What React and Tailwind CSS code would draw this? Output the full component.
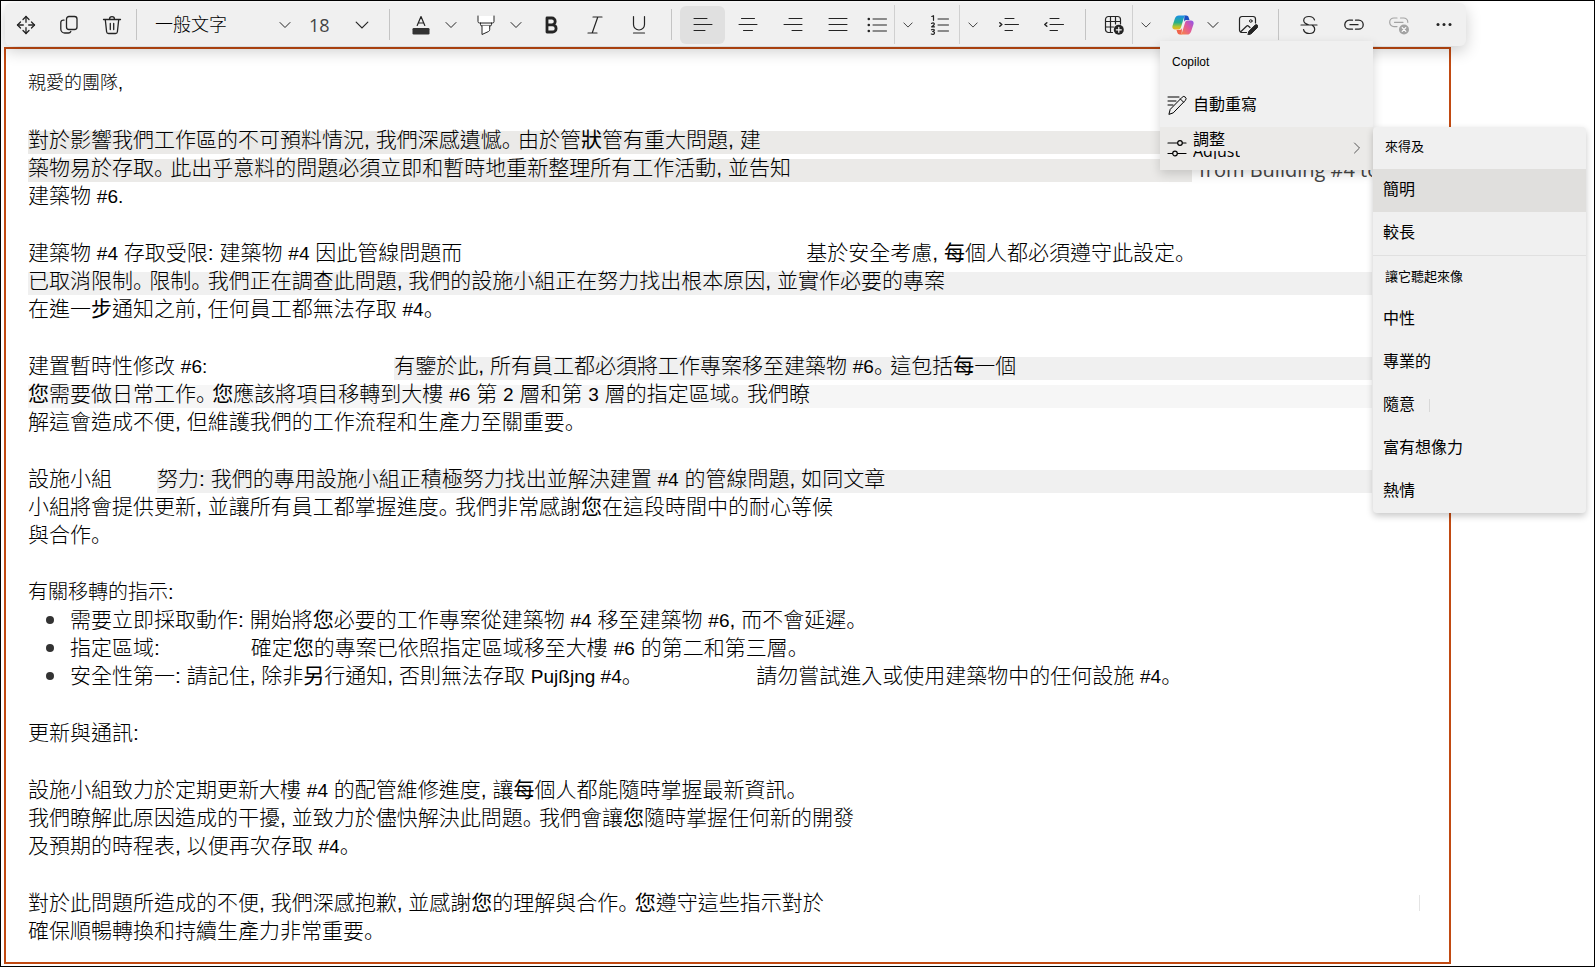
import React, { useState } from 'react';

const Svg = ({ children, size = 20, className = '' }) => (
  <svg
    width={size}
    height={size}
    viewBox="0 0 20 20"
    fill="none"
    stroke="currentColor"
    strokeWidth="1"
    strokeLinecap="round"
    strokeLinejoin="round"
    aria-hidden="true"
    className={`shrink-0 ${className}`}
  >
    {children}
  </svg>
);

const ChevronDown = ({ size = 12, className = '' }) => (
  <svg width={size} height={size} viewBox="0 0 12 12" fill="none" stroke="currentColor" strokeWidth="1" strokeLinecap="round" aria-hidden="true" className={className}>
    <path d="M1 3.5l5 5 5-5" />
  </svg>
);

const MoveIcon = () => (
  <Svg>
    <g strokeWidth="1.3">
      <path d="M10 1.5v5.8M10 12.7v5.8M1.5 10h5.8M12.7 10h5.8" />
      <path d="M7 4.5l3-3 3 3M7 15.5l3 3 3-3M4.5 7l-3 3 3 3M15.5 7l3 3-3 3" />
    </g>
  </Svg>
);

const CopyIcon = () => (
  <Svg>
    <g strokeWidth="1.3">
      <rect x="7.5" y="1.5" width="10.5" height="13" rx="2.5" />
      <path d="M5 5.2A2.4 2.4 0 0 0 1.8 7.5V14a4 4 0 0 0 4 4h3.7a2.5 2.5 0 0 0 2.3-1.5" />
    </g>
  </Svg>
);

const TrashIcon = () => (
  <Svg>
    <g strokeWidth="1.3">
      <path d="M1.5 4.5h17M7.5 4.2a2.5 2.5 0 0 1 5 0" />
      <path d="M3.3 4.7l1.3 12a2 2 0 0 0 2 1.8h6.8a2 2 0 0 0 2-1.8l1.3-12M8.3 8.5v6M11.7 8.5v6" />
    </g>
  </Svg>
);

const FontColorIcon = () => (
  <Svg>
    <path d="M6.2 10.5L10 1.5l3.8 9M7.4 8h5.2" strokeWidth="1.2" />
    <rect x="1.5" y="13" width="17" height="6.5" rx="1.2" fill="#333" stroke="none" />
  </Svg>
);

const HighlightIcon = () => (
  <Svg>
    <path d="M2 1v5.5A1.5 1.5 0 0 0 3.5 8h13A1.5 1.5 0 0 0 18 6.5V1H2z" fill="#fff" stroke="none" />
    <path d="M2 1v5.5A1.5 1.5 0 0 0 3.5 8h13A1.5 1.5 0 0 0 18 6.5V1" />
    <path d="M4.5 8v1.5A1.5 1.5 0 0 0 6 11h8a1.5 1.5 0 0 0 1.5-1.5V8" />
    <path d="M6 11v8.5l6.5-3a2 2 0 0 0 1.2-1.8V11" fill="#fff" />
  </Svg>
);

const BoldIcon = () => (
  <Svg>
    <path d="M6 3h4.8a3.4 3.4 0 0 1 0 6.8H6zM6 9.8h5.5a3.6 3.6 0 0 1 0 7.2H6z" strokeWidth="2.8" />
  </Svg>
);

const ItalicIcon = () => (
  <Svg>
    <path d="M8 2h9M3 18h9M12.8 2L7.2 18" strokeWidth="1.2" />
  </Svg>
);

const UnderlineIcon = () => (
  <Svg>
    <path d="M4.5 1.5v8a5.5 5.5 0 0 0 11 0v-8M4.5 18h11" strokeWidth="1.2" />
  </Svg>
);

const AlignLeftIcon = () => (
  <Svg>
    <path d="M1 3.5h13M1 9.5h18M1 15.5h11" />
  </Svg>
);

const AlignCenterIcon = () => (
  <Svg>
    <path d="M3.5 3.5h13M1 9.5h18M5.5 15.5h9" />
  </Svg>
);

const AlignRightIcon = () => (
  <Svg>
    <path d="M6 3.5h13M1 9.5h18M9 15.5h10" />
  </Svg>
);

const JustifyIcon = () => (
  <Svg>
    <path d="M1 3.5h18M1 9.5h18M1 15.5h18" />
  </Svg>
);

const BulletsIcon = () => (
  <Svg>
    <path d="M6 4h13.5M6 10h13.5M6 16h13.5" />
    <g fill="currentColor" stroke="none">
      <circle cx="1.8" cy="4" r="1.3" />
      <circle cx="1.8" cy="10" r="1.3" />
      <circle cx="1.8" cy="16" r="1.3" />
    </g>
  </Svg>
);

const NumberingIcon = () => (
  <Svg>
    <path d="M8 4h10.5M8 10h10.5M8 16h10.5" />
    <path d="M1.8 1.5L3.5.7v4.6M1.5 8.4q1.7-1.2 2.6 0t-2.4 3.4h2.8M1.5 14.8q1.6-1 2.6-.2t-1.4 1.900q2.3.3 1.6 1.900t-3 .6" strokeWidth="1.2" />
  </Svg>
);

const IndentIcon = () => (
  <Svg>
    <path d="M6 3.5h9M6 9.5h13.5M6 15.5h7.5" />
    <path d="M.8 7.7L2.8 9.5.8 11.3" strokeWidth="1.5" />
  </Svg>
);

const OutdentIcon = () => (
  <Svg>
    <path d="M6 3.5h9M6 9.5h13.5M6 15.5h7.5" />
    <path d="M2.8 7.7L.8 9.5l2 1.8" strokeWidth="1.5" />
  </Svg>
);

const TableAddIcon = () => (
  <Svg>
    <path d="M8.5 17.5h-4a3 3 0 0 1-3-3v-10a3 3 0 0 1 3-3h9a3 3 0 0 1 3 3V9M1.5 6.5h15M1.5 12h8M6.5 1.5v16M11.5 1.5V9" strokeWidth="1.2" />
    <circle cx="14.8" cy="14.8" r="5" fill="#242424" stroke="none" />
    <path d="M14.8 12.3v5M12.3 14.8h5" stroke="#fff" strokeWidth="1.2" />
  </Svg>
);

const CopilotIcon = () => (
  <svg width="22" height="20" viewBox="0 0 22 20" aria-hidden="true" className="shrink-0">
    <defs>
      <linearGradient id="cpBlue" x1="0" y1="0" x2="0" y2="1">
        <stop offset="0" stopColor="#1b8fe8" />
        <stop offset="0.5" stopColor="#27b08a" />
        <stop offset="0.8" stopColor="#b6c52c" />
        <stop offset="1" stopColor="#f2b01e" />
      </linearGradient>
      <linearGradient id="cpPink" x1="1" y1="0" x2="0" y2="1">
        <stop offset="0" stopColor="#8a55ee" />
        <stop offset="0.45" stopColor="#e0589c" />
        <stop offset="1" stopColor="#fb8a3c" />
      </linearGradient>
    </defs>
    <path d="M12.5.5h1.8c1.2 0 2 .7 2.4 1.9l.8 2.6h-3.2c-1.3 0-2 .8-2.4 2z" fill="#1c4fc4" />
    <path d="M6.8.5h7c-1 .2-1.6 1-2 2.4L9 12.2c-.5 1.5-1.4 2.3-2.8 2.3H3c-2.2 0-3.1-1.5-2.4-3.9l2.3-7C3.6 1.5 4.9.5 6.8.5z" fill="url(#cpBlue)" />
    <path d="M9.5 19.5H7.7c-1.2 0-2-.7-2.4-1.9L4.5 15h3.2c1.3 0 2-.8 2.4-2z" fill="#f0644b" />
    <path d="M15.2 19.5h-7c1-.2 1.6-1 2-2.4L13 7.8c.5-1.5 1.4-2.3 2.8-2.3H19c2.2 0 3.1 1.5 2.4 3.9l-2.3 7c-.7 2.1-2 3.1-3.9 3.1z" fill="url(#cpPink)" />
  </svg>
);

const ImageEditIcon = () => (
  <Svg>
    <path d="M8.5 17.5H4A2.5 2.5 0 0 1 1.5 15V4A2.5 2.5 0 0 1 4 1.5h11A2.5 2.5 0 0 1 17.5 4v4M3 16.5l5.5-5.3a1.5 1.5 0 0 1 2.1 0l1.4 1.3" strokeWidth="1.2" />
    <circle cx="12.8" cy="6" r="1.3" />
    <path d="M10 19.5l.8-3.2 6.3-6.2a1.7 1.7 0 0 1 2.4 2.4l-6.3 6.2z" fill="#242424" />
  </Svg>
);

const StrikeIcon = () => (
  <Svg>
    <path d="M15.5 5c-.6-2.1-2.7-3.5-5.5-3.5-3 0-5.3 1.5-5.3 4 0 2.200 1.800 3.400 5.300 4.500M2 10h16M4.500 14.500c.6 2.400 2.700 4 5.700 4 3.300 0 5.500-1.700 5.500-4.300 0-1.700-.9-3-2.700-4.200" strokeWidth="1.2" />
  </Svg>
);

const LinkIcon = () => (
  <Svg>
    <path d="M8.5 5.2H5.3a4.5 4.5 0 0 0 0 9h3.2M11.5 5.2h3.2a4.5 4.5 0 0 1 0 9h-3.2M6 9.7h8" strokeWidth="1.3" />
  </Svg>
);

const UnlinkIcon = () => (
  <Svg className="text-[#a3a3a3]">
    <path d="M8 3H5a4.3 4.3 0 0 0 0 8.6h3M11.5 3h3a4.3 4.3 0 0 1 4.3 4.3M5.5 7.3H14" strokeWidth="1.2" />
    <circle cx="15" cy="14.5" r="5" fill="#a3a3a3" stroke="none" />
    <path d="M13.2 12.7l3.6 3.6M16.8 12.7l-3.6 3.6" stroke="#fff" strokeWidth="1.2" />
  </Svg>
);

const MoreIcon = () => (
  <Svg>
    <g fill="currentColor" stroke="none">
      <circle cx="4" cy="9.5" r="1.5" />
      <circle cx="10" cy="9.5" r="1.5" />
      <circle cx="16" cy="9.5" r="1.5" />
    </g>
  </Svg>
);

const RewriteIcon = () => (
  <Svg>
    <path d="M1 2h11M1 6h8M1 10h5" />
    <path d="M2 19l1.2-4.6L15.2 2.2a2.200 2.200 0 0 1 3.200 3.100L6.500 17.600zM13.400 4l3.100 3.100" />
  </Svg>
);

const AdjustIcon = () => (
  <Svg>
    <path d="M1 5h9.5M15.5 5H19M1 15.5h4.5M10.5 15.5H19" strokeWidth="1.2" />
    <circle cx="13" cy="5" r="2.3" strokeWidth="1.2" />
    <circle cx="8" cy="15.5" r="2.3" strokeWidth="1.2" />
  </Svg>
);

const ToolButton = ({ label, className = 'w-[44px]', children, ...rest }) => (
  <button type="button" aria-label={label} className={`flex h-[38px] shrink-0 items-center justify-center rounded-md hover:bg-[#e0e0e0] ${className}`} {...rest}>
    {children}
  </button>
);

const Divider = ({ className = '' }) => <div className={`h-[31px] w-px shrink-0 bg-[#c4c4c4] ${className}`} />;

const SplitEdge = () => <div className="h-[39px] w-px shrink-0 bg-[#d0d0d0]" />;

const CopilotMenu = () => (
  <div className="absolute -left-[6px] top-[35px] z-20 w-[213px] bg-[#f0f0f0] text-black shadow-[0_4px_10px_rgba(0,0,0,0.16)]" role="menu">
    <p className="flex h-[43px] items-center px-3 text-xs">Copilot</p>
    <button type="button" role="menuitem" className="flex h-[43px] w-full items-center gap-[6px] pl-[7px] text-base">
      <RewriteIcon />
      <span>自動重寫</span>
    </button>
    <div className="relative">
      <button type="button" role="menuitem" className="flex h-[43px] w-full items-center gap-[6px] bg-[#ebeae8] pl-[7px] pr-[10px] text-base">
        <AdjustIcon />
        <span className="flex flex-1 flex-col items-start gap-px self-start pt-[3px]">
          <span className="leading-5">調整</span>
          <span className="flex h-2 items-end overflow-hidden font-['Open_Sans','Noto_Sans',sans-serif] leading-4">Adjust</span>
        </span>
        <ChevronDown className="-rotate-90 text-[#555]" />
      </button>
      <AdjustMenu />
    </div>
  </div>
);

const lengthOptions = ['簡明', '較長'];
const toneOptions = ['中性', '專業的', '隨意', '富有想像力', '熱情'];

const AdjustMenu = () => {
  const [selected, setSelected] = useState('簡明');

  const renderItem = (item) => (
    <button
      key={item}
      type="button"
      role="menuitem"
      onClick={() => setSelected(item)}
      className={`flex h-[43px] w-full items-center px-[10px] text-base ${selected === item ? 'bg-[#e0dfdd]' : ''}`}
    >
      {item}
      {item === '隨意' && <span className="ml-[14px] h-[13px] w-px bg-[#d8d8d8]" />}
    </button>
  );

  return (
    <div className="absolute left-full top-0 w-[213px] rounded-sm bg-[#f0f0f0] shadow-[0_3px_7px_rgba(0,0,0,0.22)]" role="menu">
      <p className="flex h-[42px] items-center px-3 pb-[2px] text-[13px]">來得及</p>
      {lengthOptions.map(renderItem)}
      <div className="h-px bg-[#e0e0e0]" />
      <p className="flex h-[42px] items-center px-3 text-[13px]">讓它聽起來像</p>
      {toneOptions.map(renderItem)}
    </div>
  );
};

const Toolbar = () => {
  const [align, setAlign] = useState('left');
  const alignments = [
    { id: 'left', label: '靠左對齊', icon: <AlignLeftIcon /> },
    { id: 'center', label: '置中', icon: <AlignCenterIcon /> },
    { id: 'right', label: '靠右對齊', icon: <AlignRightIcon /> },
    { id: 'justify', label: '左右對齊', icon: <JustifyIcon /> },
  ];

  return (
    <div className="relative z-10 mt-[2px] ml-1 flex h-[43px] w-fit items-center rounded-md bg-[#f0f0f0] text-[#242424] shadow-[0_5px_16px_rgba(0,0,0,0.2)]">
      <ToolButton label="移動" className="w-[42px]"><MoveIcon /></ToolButton>
      <ToolButton label="複製" className="w-[43px]"><CopyIcon /></ToolButton>
      <ToolButton label="刪除" className="w-[43px]"><TrashIcon /></ToolButton>
      <Divider className="ml-[3px]" />
      <label className="grid w-[161px] items-center">
        <select aria-label="段落樣式" className="col-start-1 row-start-1 appearance-none bg-transparent pl-[18px] text-lg font-light text-black outline-none">
          <option>一般文字</option>
        </select>
        <ChevronDown className="pointer-events-none col-start-1 row-start-1 mr-[7px] justify-self-end" />
      </label>
      <label className="grid w-[91px] items-center">
        <select aria-label="字型大小" className="col-start-1 row-start-1 appearance-none bg-transparent pl-[11px] font-['Open_Sans','Noto_Sans',sans-serif] text-lg text-[#444] outline-none">
          <option>18</option>
        </select>
        <ChevronDown size={14} className="pointer-events-none col-start-1 row-start-1 mr-5 justify-self-end" />
      </label>
      <Divider />
      <ToolButton label="字型色彩" className="ml-[14px] w-[34px]"><FontColorIcon /></ToolButton>
      <ToolButton label="字型色彩選項" className="w-[25px]"><ChevronDown /></ToolButton>
      <ToolButton label="醒目提示" className="ml-[6px] w-[34px]"><HighlightIcon /></ToolButton>
      <ToolButton label="醒目提示選項" className="w-[26px]"><ChevronDown /></ToolButton>
      <ToolButton label="粗體"><BoldIcon /></ToolButton>
      <ToolButton label="斜體"><ItalicIcon /></ToolButton>
      <ToolButton label="底線"><UnderlineIcon /></ToolButton>
      <Divider className="ml-[10px] mr-2" />
      {alignments.map((item) => (
        <ToolButton
          key={item.id}
          label={item.label}
          aria-pressed={align === item.id}
          onClick={() => setAlign(item.id)}
          className={align === item.id ? 'w-[45px] bg-[#e0e0e0]' : 'w-[45px]'}
        >
          {item.icon}
        </ToolButton>
      ))}
      <ToolButton label="項目符號清單" className="w-[34px]"><BulletsIcon /></ToolButton>
      <SplitEdge />
      <ToolButton label="項目符號選項" className="w-[26px]"><ChevronDown size={10} /></ToolButton>
      <ToolButton label="編號清單" className="w-[38px]"><NumberingIcon /></ToolButton>
      <SplitEdge />
      <ToolButton label="編號選項" className="w-[26px]"><ChevronDown size={10} /></ToolButton>
      <ToolButton label="增加縮排" className="w-[46px]"><IndentIcon /></ToolButton>
      <ToolButton label="減少縮排"><OutdentIcon /></ToolButton>
      <Divider className="mx-[9px]" />
      <ToolButton label="插入表格" className="w-[37px]"><TableAddIcon /></ToolButton>
      <SplitEdge />
      <ToolButton label="表格選項" className="w-[26px]"><ChevronDown size={10} /></ToolButton>
      <div className="relative ml-[7px] flex">
        <ToolButton label="Copilot" className="w-[34px]"><CopilotIcon /></ToolButton>
        <ToolButton label="Copilot 選項" className="w-[26px]"><ChevronDown /></ToolButton>
        <CopilotMenu />
      </div>
      <ToolButton label="編輯影像"><ImageEditIcon /></ToolButton>
      <Divider className="mx-2" />
      <ToolButton label="刪除線"><StrikeIcon /></ToolButton>
      <ToolButton label="連結" className="w-[46px]"><LinkIcon /></ToolButton>
      <ToolButton label="移除連結"><UnlinkIcon /></ToolButton>
      <ToolButton label="其他" className="w-[45px]"><MoreIcon /></ToolButton>
    </div>
  );
};

const Line = ({ children }) => <div className="flex h-7 whitespace-pre leading-7">{children}</div>;

const Mark = ({ children, className = 'flex-1 bg-[#f0f0f0]' }) => (
  <span className={`mt-[5px] h-[23px] leading-[18px] ${className}`}>{children}</span>
);

// latin runs are set a little smaller than the chinese text
const N = ({ children }) => <span className="text-[19px] leading-[0]">{children}</span>;

// full stop that sits on the baseline
const Stop = () => <span className="font-['Noto_Sans_CJK_JP',sans-serif] leading-[0]">。</span>;

const Bullet = ({ children }) => (
  <li className="flex h-7 whitespace-pre leading-7">
    <span className="ml-[18px] mr-4 mt-[10px] size-2 shrink-0 rounded-full bg-[#333]" />
    {children}
  </li>
);

const Letter = () => (
  <article className="flex flex-col gap-[29px] text-[21px] font-light text-black [font-feature-settings:'halt']">
    <div>
      <Line><span className="text-lg leading-7">親愛的團隊,</span></Line>
    </div>
    <div>
      <Line>
        <Mark className="flex-1 bg-[#ebeae8]">對於影響我們工作區的不可預料情況, 我們深感遺憾<Stop /> 由於管<b>狀</b>管有重大問題, 建</Mark>
      </Line>
      <Line>
        <Mark className="flex-1 bg-[#ebeae8]">築物易於存取<Stop /> 此出乎意料的問題必須立即和暫時地重新整理所有工作活動, 並告知</Mark>
        <span className="w-[180px] overflow-hidden pl-[7px] font-['Open_Sans','Noto_Sans',sans-serif] text-xl font-normal leading-8 text-[#444]">from Building #4 to</span>
      </Line>
      <Line><span>建築物 <N>#6.</N></span></Line>
    </div>
    <div>
      <Line>
        <span>建築物 <N>#4</N> 存取受限: 建築物 <N>#4</N> 因此管線問題而</span>
        <span className="ml-[344px]">基於安全考慮, <b>每</b>個人都必須遵守此設定<Stop /></span>
      </Line>
      <Line>
        <Mark>已取消限制<Stop /> 限制<Stop /> 我們正在調查此問題, 我們的設施小組正在努力找出根本原因, 並實作必要的專案</Mark>
      </Line>
      <Line><span>在進一<b>步</b>通知之前, 任何員工都無法存取 <N>#4</N><Stop /></span></Line>
    </div>
    <div>
      <Line>
        <span>建置暫時性修改 <N>#6:</N></span>
        <Mark className="ml-[187px] flex-1 bg-[#f0f0f0]">有鑒於此, 所有員工都必須將工作專案移至建築物 <N>#6</N><Stop /> 這包括<b>每</b>一個</Mark>
      </Line>
      <Line>
        <Mark className="flex-1 bg-[#f6f6f6]"><b>您</b>需要做日常工作<Stop /> <b>您</b>應該將項目移轉到大樓 <N>#6</N> 第 <N>2</N> 層和第 <N>3</N> 層的指定區域<Stop /> 我們瞭</Mark>
      </Line>
      <Line><span>解這會造成不便, 但維護我們的工作流程和生產力至關重要<Stop /></span></Line>
    </div>
    <div>
      <Line>
        <span>設施小組</span>
        <Mark className="ml-[45px] flex-1 bg-[#f0f0f0]">努力: 我們的專用設施小組正積極努力找出並解決建置 <N>#4</N> 的管線問題, 如同文章</Mark>
      </Line>
      <Line><span>小組將會提供更新, 並讓所有員工都掌握進度<Stop /> 我們非常感謝<b>您</b>在這段時間中的耐心等候</span></Line>
      <Line><span>與合作<Stop /></span></Line>
    </div>
    <div>
      <Line><span className="text-xl leading-7">有關移轉的指示:</span></Line>
      <ul>
        <Bullet>
          <span>需要立即採取動作: 開始將<b>您</b>必要的工作專案從建築物 <N>#4</N> 移至建築物 <N>#6</N>, 而不會延遲<Stop /></span>
        </Bullet>
        <Bullet>
          <span>指定區域:</span>
          <span className="ml-[91px]">確定<b>您</b>的專案已依照指定區域移至大樓 <N>#6</N> 的第二和第三層<Stop /></span>
        </Bullet>
        <Bullet>
          <span>安全性第一: 請記住, 除非<b>另</b>行通知, 否則無法存取 <N>Pujßjng #4</N><Stop /></span>
          <span className="ml-[124px]">請勿嘗試進入或使用建築物中的任何設施 <N>#4</N><Stop /></span>
        </Bullet>
      </ul>
    </div>
    <div>
      <Line>更新與通訊:</Line>
    </div>
    <div>
      <Line><span>設施小組致力於定期更新大樓 <N>#4</N> 的配管維修進度, 讓<b>每</b>個人都能隨時掌握最新資訊<Stop /></span></Line>
      <Line><span>我們瞭解此原因造成的干擾, 並致力於儘快解決此問題<Stop /> 我們會讓<b>您</b>隨時掌握任何新的開發</span></Line>
      <Line><span>及預期的時程表, 以便再次存取 <N>#4</N><Stop /></span></Line>
    </div>
    <div>
      <Line>
        <span>對於此問題所造成的不便, 我們深感抱歉, 並感謝<b>您</b>的理解與合作<Stop /> <b>您</b>遵守這些指示對於</span>
        <span className="-mr-12 ml-auto mt-[6px] h-4 w-px bg-[#e4e4e4]" />
      </Line>
      <Line><span>確保順暢轉換和持續生產力非常重要<Stop /></span></Line>
    </div>
  </article>
);

const App = () => {
  return (
    <div className="min-h-screen overflow-hidden border border-black bg-white pb-[2px] font-['Liberation_Sans','Noto_Sans_CJK_TC',sans-serif]">
      <Toolbar />
      <main className="ml-[3px] mr-[143px] mt-px border-2 border-[#c14a12] pb-[17px] pl-[22px] pr-[77px] pt-[20px]">
        <Letter />
      </main>
    </div>
  );
};

export default App;
